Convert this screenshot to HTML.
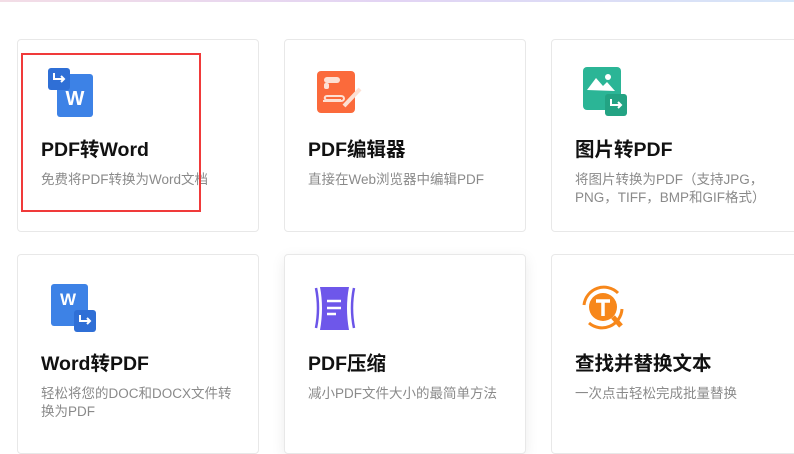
<!DOCTYPE html>
<html><head><meta charset="utf-8"><style>
body{margin:0;width:794px;height:430px;overflow:hidden;background:#fff;font-family:"Liberation Sans","Noto Sans CJK SC",sans-serif;position:relative}
.top{position:absolute;left:0;top:0;width:794px;height:2px;background:linear-gradient(90deg,#f3dde6,#e2d4f4,#d6e6f8)}
.card{position:absolute;width:242px;border:1px solid #e8e8e8;border-radius:4px;background:#fff;box-sizing:border-box}
.r1{top:39px;height:193px}.r2{top:254px;height:200px}
.c1{left:17px}.c2{left:284px}.c3{left:551px;width:260px}
.sh{box-shadow:0 4px 14px rgba(0,0,0,.08)}
.ic{position:absolute;left:29px;top:27px;width:50px;height:50px}
.t{position:absolute;left:23px;top:93px;font-size:19.5px;font-weight:bold;color:#111;white-space:nowrap}
.r2 .t{top:92px}
.d{position:absolute;left:23px;top:131px;font-size:13.5px;color:#8a8a8a;line-height:18px;width:200px}
.r2 .d{top:130px}
.red{position:absolute;left:21px;top:53px;width:180px;height:159px;border:2px solid #f03a3a;box-sizing:border-box}
</style></head><body>
<div class="top"></div>

<div class="card r1 c1">
<svg class="ic" viewBox="0 0 50 50" style="left:28px;top:27px"><rect x="11" y="7" width="36" height="43" rx="3" fill="#3d82e6"/><text x="29" y="38" font-family="Liberation Sans" font-weight="bold" font-size="20" fill="#fff" text-anchor="middle">W</text><rect x="2" y="1" width="22" height="22" rx="3" fill="#2f6fd6"/><path d="M8 6v6h10m-3-3l3 3-3 3" stroke="#fff" stroke-width="2" fill="none"/></svg>
<div class="t">PDF转Word</div><div class="d">免费将PDF转换为Word文档</div></div>

<div class="card r1 c2">
<svg class="ic" viewBox="0 0 50 50" style="left:29px;top:28px"><rect x="3" y="3" width="38" height="42" rx="4" fill="#fb6a3b"/><rect x="10" y="9" width="16" height="6" rx="3" fill="#fde0d3"/><rect x="10" y="15" width="5" height="6" rx="2" fill="#fde0d3"/><path d="M9 33h18c4 0 4-5 0-5H13c-3 0-3 4 0 4h14" stroke="#fde0d3" stroke-width="2" fill="none"/><path d="M30 38l16-17" stroke="#fde0d3" stroke-width="4"/></svg>
<div class="t">PDF编辑器</div><div class="d">直接在Web浏览器中编辑PDF</div></div>

<div class="card r1 c3">
<svg class="ic" viewBox="0 0 50 50" style="left:29px;top:27px"><rect x="2" y="0" width="38" height="43" rx="4" fill="#2bb596"/><path d="M6 23l9-12 7 8 4-4 8 9z" fill="#fff"/><circle cx="27" cy="10" r="3" fill="#fff"/><rect x="24" y="27" width="22" height="22" rx="3" fill="#23a383"/><path d="M30 32v6h10m-3-3l3 3-3 3" stroke="#fff" stroke-width="2" fill="none"/></svg>
<div class="t">图片转PDF</div><div class="d">将图片转换为PDF（支持JPG，PNG，TIFF，BMP和GIF格式）</div></div>

<div class="card r2 c1">
<svg class="ic" viewBox="0 0 50 50" style="left:32px;top:28px"><rect x="1" y="1" width="37" height="42" rx="3" fill="#3d82e6"/><text x="18" y="22" font-family="Liberation Sans" font-weight="bold" font-size="17" fill="#fff" text-anchor="middle">W</text><rect x="24" y="27" width="22" height="22" rx="3" fill="#2f6fd6"/><path d="M30 32v6h10m-3-3l3 3-3 3" stroke="#fff" stroke-width="2" fill="none"/></svg>
<div class="t">Word转PDF</div><div class="d">轻松将您的DOC和DOCX文件转换为PDF</div></div>

<div class="card r2 c2 sh">
<svg class="ic" viewBox="0 0 50 50" style="left:25px;top:30px"><path d="M6 3q4 20 0 40M44 3q-4 20 0 40" stroke="#6b55e8" stroke-width="2.5" fill="none"/><path d="M10 2h29q-4 21 0 43H10q4-22 0-43z" fill="#6e57ea"/><path d="M17 16h14M17 23h14M17 29h9" stroke="#fff" stroke-width="2.5"/></svg>
<div class="t">PDF压缩</div><div class="d">减小PDF文件大小的最简单方法</div></div>

<div class="card r2 c3">
<svg class="ic" viewBox="0 0 50 50" style="left:26px;top:29px"><path d="M6 21a20 20 0 0 1 34-12M44 25a20 20 0 0 1-33 14" stroke="#f7871a" stroke-width="3" fill="none"/><circle cx="25" cy="23" r="14" fill="#f7871a"/><path d="M18 17h14M25 17v15" stroke="#fff" stroke-width="3.5"/><path d="M35 33l8 9" stroke="#f7871a" stroke-width="5"/></svg>
<div class="t">查找并替换文本</div><div class="d">一次点击轻松完成批量替换</div></div>

<div class="red"></div>
</body></html>
